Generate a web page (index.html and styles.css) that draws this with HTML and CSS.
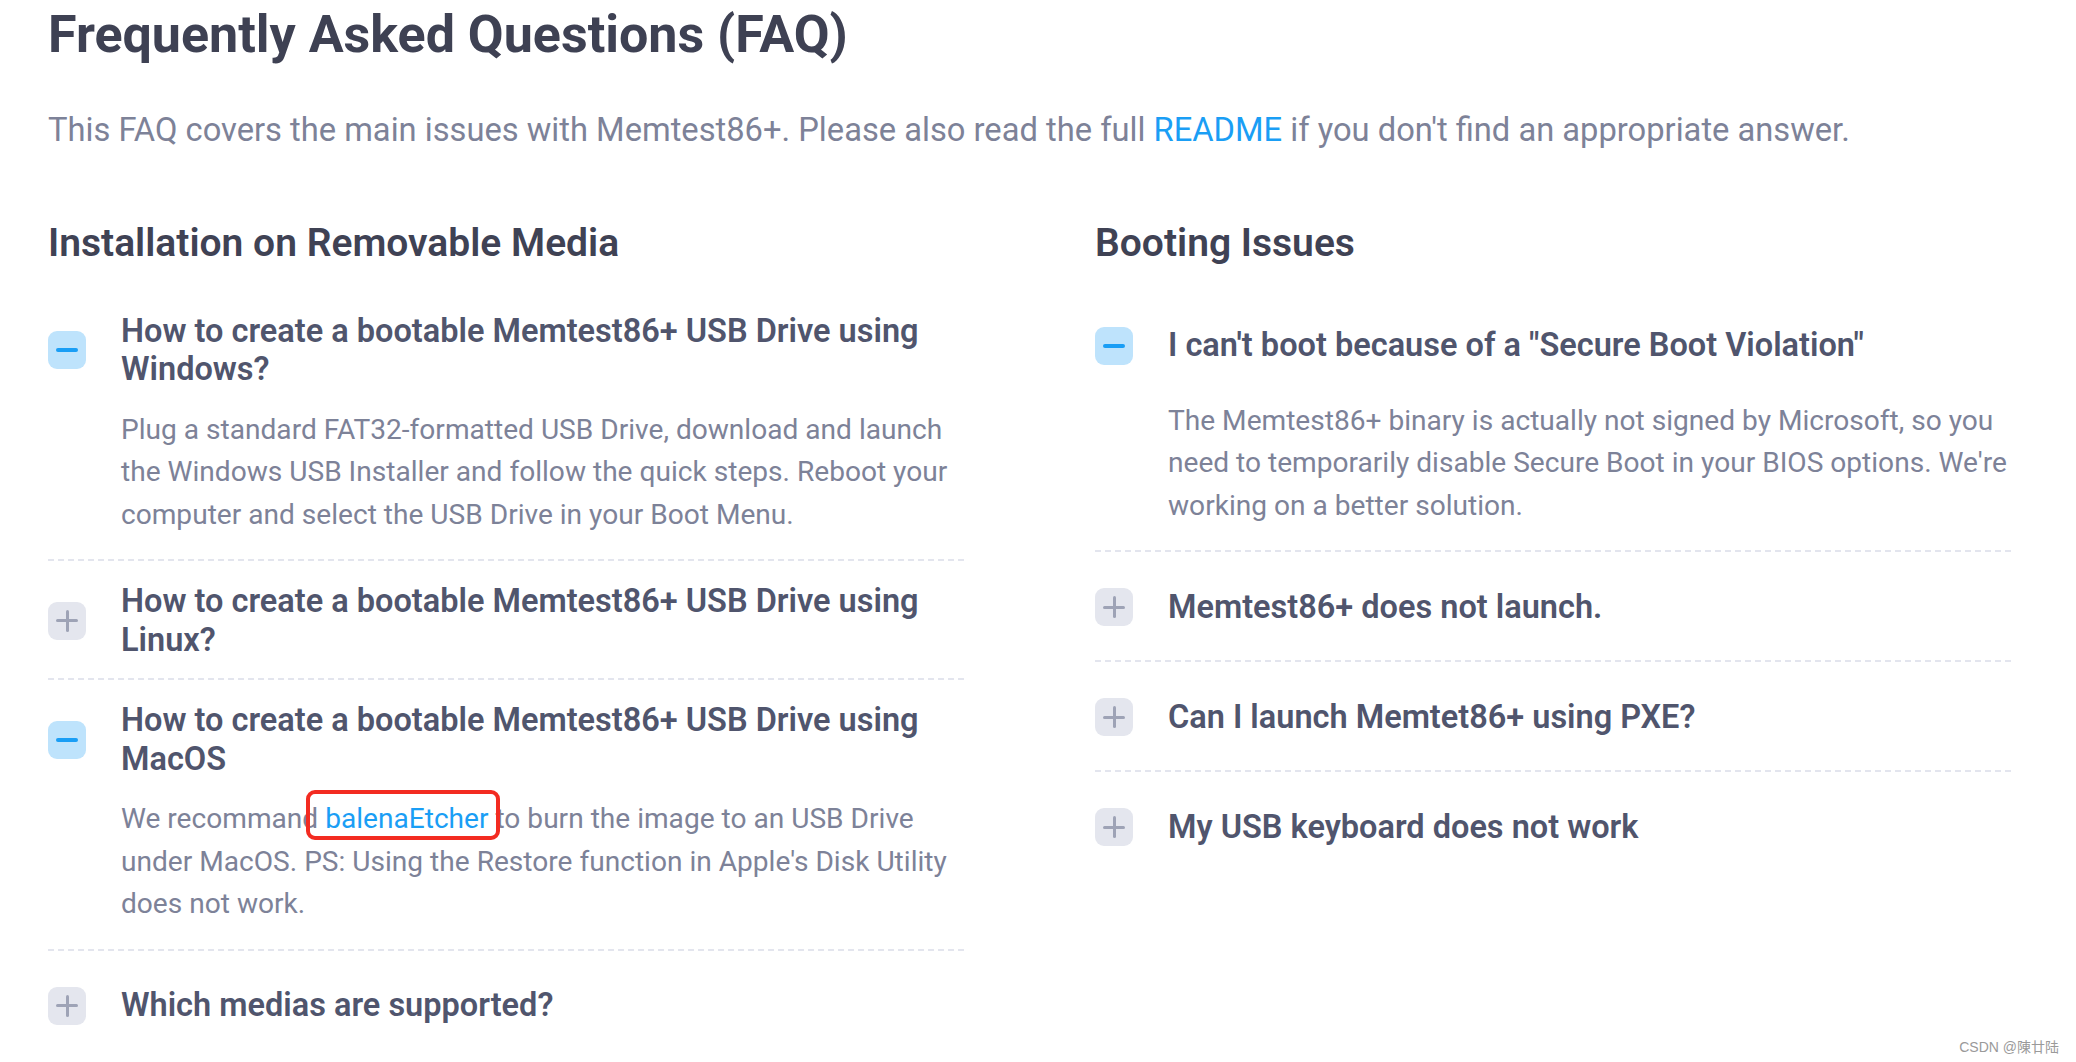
FILE: index.html
```html
<!DOCTYPE html>
<html lang="en">
<head>
<meta charset="utf-8">
<title>Frequently Asked Questions (FAQ)</title>
<link rel="stylesheet" href="styles.css">
</head>
<body>
<main class="page">
  <h1 class="title">Frequently Asked Questions (FAQ)</h1>
  <p class="lead">This FAQ covers the main issues with Memtest86+. Please also read the full <a class="link" href="#">README</a> if you don't find an appropriate answer.</p>

  <div class="columns">
    <section class="col">
      <h2 class="section">Installation on Removable Media</h2>
      <div class="list">
        <div class="item open">
          <div class="q-row">
            <span class="icon icon-minus"></span>
            <h3 class="q">How to create a bootable Memtest86+ USB Drive using Windows?</h3>
          </div>
          <p class="answer">Plug a standard FAT32-formatted USB Drive, download and launch the Windows USB Installer and follow the quick steps. Reboot your computer and select the USB Drive in your Boot Menu.</p>
        </div>
        <div class="item">
          <div class="q-row">
            <span class="icon icon-plus"></span>
            <h3 class="q">How to create a bootable Memtest86+ USB Drive using Linux?</h3>
          </div>
        </div>
        <div class="item open">
          <div class="q-row">
            <span class="icon icon-minus"></span>
            <h3 class="q">How to create a bootable Memtest86+ USB Drive using MacOS</h3>
          </div>
          <p class="answer">We recommand <span class="annot"><a class="link" href="#">balenaEtcher</a></span> to burn the image to an USB Drive under MacOS. PS: Using the Restore function in Apple's Disk Utility does not work.</p>
        </div>
        <div class="item">
          <div class="q-row">
            <span class="icon icon-plus"></span>
            <h3 class="q">Which medias are supported?</h3>
          </div>
        </div>
      </div>
    </section>

    <section class="col">
      <h2 class="section">Booting Issues</h2>
      <div class="list">
        <div class="item open">
          <div class="q-row">
            <span class="icon icon-minus"></span>
            <h3 class="q">I can't boot because of a "Secure Boot Violation"</h3>
          </div>
          <p class="answer">The Memtest86+ binary is actually not signed by Microsoft, so you need to temporarily disable Secure Boot in your BIOS options. We're working on a better solution.</p>
        </div>
        <div class="item">
          <div class="q-row">
            <span class="icon icon-plus"></span>
            <h3 class="q">Memtest86+ does not launch.</h3>
          </div>
        </div>
        <div class="item">
          <div class="q-row">
            <span class="icon icon-plus"></span>
            <h3 class="q">Can I launch Memtet86+ using PXE?</h3>
          </div>
        </div>
        <div class="item">
          <div class="q-row">
            <span class="icon icon-plus"></span>
            <h3 class="q">My USB keyboard does not work</h3>
          </div>
        </div>
      </div>
    </section>
  </div>
</main>
<div class="watermark">CSDN @陳廿陆</div>
</body>
</html>
```

FILE: styles.css
```css
html, body {
  margin: 0;
  padding: 0;
  background: #ffffff;
}

body {
  font-family: Roboto, "Noto Sans", "Liberation Sans", sans-serif;
  color: #7d8298;
}

.page {
  padding: 4px 53px 0 48px;
}

.title {
  margin: 0;
  font-size: 52px;
  line-height: 62px;
  font-weight: 700;
  color: #3e4153;
}

.lead {
  margin: 40px 0 0;
  font-size: 32.7px;
  line-height: 48px;
  font-weight: 400;
  color: #7d8298;
}

.link {
  color: #1a9ef5;
  text-decoration: none;
}

.columns {
  display: grid;
  grid-template-columns: 918px 918px;
  column-gap: 129px;
  margin-top: 66px;
}

.section {
  margin: 0 0 22.5px;
  font-size: 39px;
  line-height: 46px;
  font-weight: 600;
  color: #3f4254;
}

.item {
  padding: 23px 0 19px;
}

.item + .item {
  background-image: repeating-linear-gradient(90deg, #e3e5ee 0 6px, transparent 6px 10px);
  background-size: 100% 2px;
  background-repeat: no-repeat;
  background-position: left top;
}

.q-row {
  display: flex;
  align-items: center;
  gap: 35px;
  min-height: 68px;
}

.icon {
  flex: none;
  position: relative;
  width: 38px;
  height: 38px;
  border-radius: 9px;
}

.icon-minus {
  background: #bee3fc;
}

.icon-minus::before {
  content: "";
  position: absolute;
  left: 8px;
  top: 17px;
  width: 22px;
  height: 4px;
  border-radius: 2px;
  background: #1a9ef5;
}

.icon-plus {
  background: #e4e6ee;
}

.icon-plus::before,
.icon-plus::after {
  content: "";
  position: absolute;
  background: #9ea3b6;
  border-radius: 1.5px;
}

.icon-plus::before {
  left: 8px;
  top: 17.5px;
  width: 22px;
  height: 3px;
}

.icon-plus::after {
  left: 17.5px;
  top: 8px;
  width: 3px;
  height: 22px;
}

.q {
  margin: 0;
  font-size: 32.5px;
  line-height: 38.5px;
  font-weight: 600;
  color: #50556d;
}

.answer {
  margin: 20px -12px 4px 73px;
  font-size: 28.1px;
  line-height: 42.5px;
  font-weight: 400;
  color: #7d8298;
}

.annot {
  position: relative;
}

.annot::after {
  content: "";
  position: absolute;
  left: -19px;
  right: -12px;
  top: -12px;
  bottom: -5px;
  border: 4px solid #f32b21;
  border-radius: 9px;
  pointer-events: none;
}

.watermark {
  position: absolute;
  right: 17px;
  bottom: 6px;
  font-family: "Liberation Sans", "Noto Sans CJK SC", sans-serif;
  font-size: 14px;
  color: #9a9a9a;
}
```
